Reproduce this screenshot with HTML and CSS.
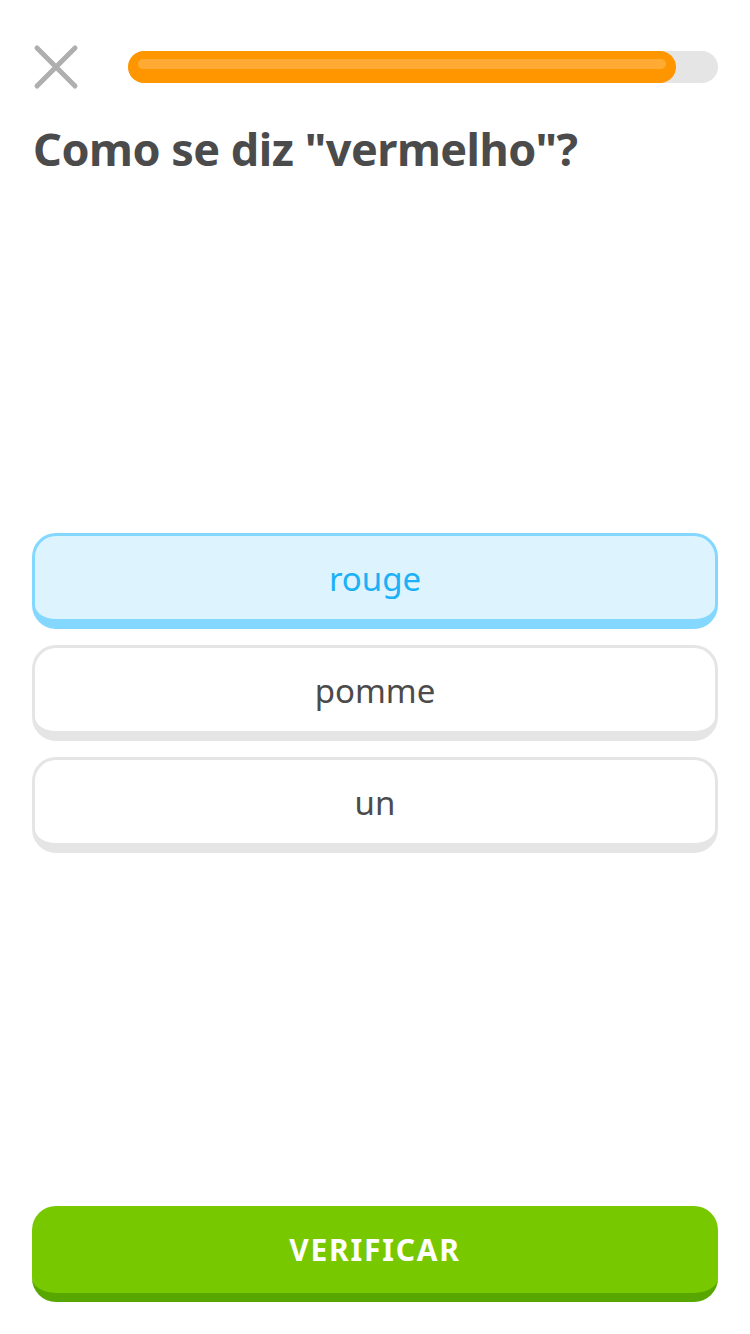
FILE: index.html
```html
<!DOCTYPE html>
<html lang="pt">
<head>
<meta charset="utf-8">
<title>Como se diz</title>
<link rel="stylesheet" href="styles.css">
</head>
<body>
<div class="screen">
  <header class="top">
    <button class="close" aria-label="Fechar">
      <svg width="46" height="46" viewBox="0 0 46 46"><path d="M4 4 L42 42 M42 4 L4 42" stroke="#afafaf" stroke-width="5" stroke-linecap="round" fill="none"/></svg>
    </button>
    <div class="track"><div class="fill" style="width:92.9%"><div class="shine"></div></div></div>
  </header>
  <h1 class="title">Como se diz "vermelho"?</h1>
  <div class="options">
    <div class="option selected">rouge</div>
    <div class="option">pomme</div>
    <div class="option">un</div>
  </div>
  <div class="spacer"></div>
  <button class="check">VERIFICAR</button>
</div>
</body>
</html>
```
FILE: styles.css
```css
* { box-sizing: border-box; }
html, body { margin: 0; padding: 0; background: #fff; }
body { font-family: "Noto Sans", "DejaVu Sans", sans-serif; color: #4b4b4b; }
.screen {
  width: 750px;
  height: 1334px;
  padding: 44px 32px 32px 32px;
  display: flex;
  flex-direction: column;
}
.top {
  display: flex;
  align-items: center;
  height: 46px;
}
.close {
  width: 46px;
  height: 46px;
  padding: 0;
  margin: 0 0 0 1px;
  border: 0;
  background: none;
  display: flex;
}
.track {
  margin-left: 49px;
  flex: 1;
  height: 32px;
  background: #e5e5e5;
  border-radius: 16px;
  margin-right: 0;
}
.fill {
  height: 32px;
  background: #ff9600;
  border-radius: 16px;
  padding: 8px 10px 0 10px;
}
.shine {
  height: 10px;
  border-radius: 5px;
  background: #ffab33;
}
.title {
  margin: 29px 0 0 1px;
  font-size: 45px;
  font-weight: 700;
  line-height: 60px;
  letter-spacing: -0.5px;
  color: #4b4b4b;
}
.options {
  margin-top: 354px;
  display: flex;
  flex-direction: column;
  gap: 16px;
}
.option {
  height: 96px;
  border: 3px solid #e5e5e5;
  border-bottom-width: 10px;
  border-radius: 24px;
  background: #fff;
  display: flex;
  align-items: center;
  justify-content: center;
  font-size: 33px;
  color: #4b4b4b;
  padding-top: 2px;
}
.option.selected {
  background: #ddf4ff;
  border-color: #84d8ff;
  color: #1cb0f6;
}
.spacer { flex: 1; }
.check {
  height: 96px;
  border: 0;
  border-bottom: 9px solid #58a700;
  border-radius: 24px;
  background: #78c800;
  color: #fff;
  font-family: "Noto Sans", "DejaVu Sans", sans-serif;
  font-weight: 700;
  font-size: 30px;
  letter-spacing: 1.8px;
  padding: 0;
}
```
